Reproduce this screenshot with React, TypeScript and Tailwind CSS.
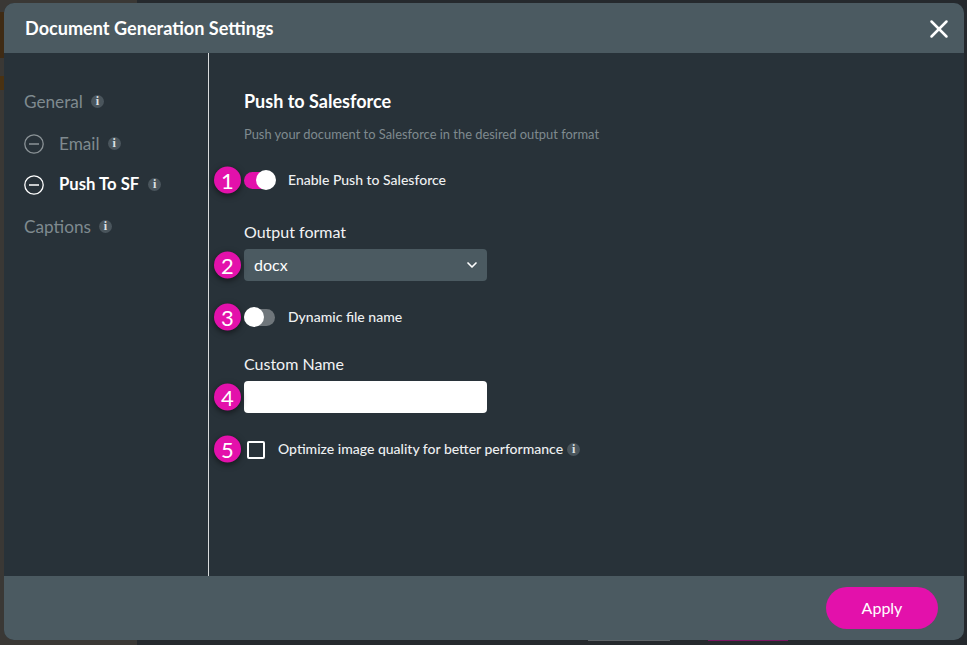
import { ChevronDown, X } from 'lucide-react'

const lato = { fontFamily: 'Lato, sans-serif' }

function Info() {
  return (
    <span className="inline-flex h-[13px] w-[13px] -translate-y-[1px] items-center justify-center rounded-full bg-[#4a555c] font-['Liberation_Serif',serif] text-[12px] font-bold leading-none text-[#dfe2e4]">
      i
    </span>
  )
}

function Badge({ n }: { n: number }) {
  return (
    <span className="absolute left-[-30px] top-1/2 flex h-[27px] w-[27px] -translate-y-1/2 items-center justify-center rounded-full bg-[#e311ab] text-[22px] leading-none text-white shadow-[0_2px_6px_rgba(0,0,0,0.55)]">
      {n}
    </span>
  )
}

function MinusCircle({ active }: { active?: boolean }) {
  return (
    <svg width="20" height="20" viewBox="0 0 20 20" fill="none" stroke={active ? '#ffffff' : '#8b9397'} strokeWidth="1.3">
      <circle cx="10" cy="10" r="9.2" />
      <path d="M5 10h10" />
    </svg>
  )
}

function Toggle({ on }: { on?: boolean }) {
  return (
    <span className={`relative block h-[17px] w-[31px] rounded-full ${on ? 'bg-[#e311ab]' : 'bg-[#6f767b]'}`}>
      <span className={`absolute top-[-2px] h-[20px] w-[20px] rounded-full bg-white ${on ? 'right-[-1px]' : 'left-0'}`} />
    </span>
  )
}

export default function App() {
  return (
    <div style={lato} className="relative h-[645px] w-[967px] overflow-hidden bg-[#25292d]">
      {/* page behind the dialog */}
      <div className="absolute inset-y-0 left-0 w-[137px] bg-[#3a3835]" />
      <div className="absolute left-0 top-[12px] h-[46px] w-[4px] bg-[#3f2b14]" />
      <div className="absolute left-0 top-[76px] h-[14px] w-[4px] bg-[#4a3212]" />
      <div className="absolute left-[588px] top-[640px] h-[1px] w-[82px] bg-[#5f6468]" />
      <div className="absolute left-[708px] top-[640px] h-[1px] w-[80px] bg-[#7a1560]" />

      <div className="relative ml-[4px] mt-[3px] flex h-[637px] w-[960px] flex-col overflow-hidden rounded-[10px] bg-[#283239]">
        <header className="flex h-[50px] shrink-0 items-center justify-between bg-[#4b5a61] pl-[21px] pr-[10px] pt-[2px]">
          <h1 className="text-[18.1px] font-bold text-white">Document Generation Settings</h1>
          <X size={30} strokeWidth={2} className="text-white" />
        </header>

        <div className="flex min-h-0 flex-1">
          <aside className="w-[205px] shrink-0 border-r border-[#d9dcdd] pl-[20px] pt-[37px] text-[17.2px] text-[#7f8a8f]">
            <div className="flex h-[24px] items-center gap-[8px]">
              General <Info />
            </div>
            <div className="mt-[18px] flex h-[24px] items-center">
              <MinusCircle />
              <span className="ml-[15px] mr-[8px]">Email</span>
              <Info />
            </div>
            <div className="mt-[17px] flex h-[24px] items-center text-[16.7px] font-bold text-white">
              <MinusCircle active />
              <span className="ml-[15px] mr-[9px]">Push To SF</span>
              <Info />
            </div>
            <div className="mt-[18px] flex h-[24px] items-center gap-[8px]">
              Captions <Info />
            </div>
          </aside>

          <main className="flex-1 pl-[35px] pt-[36px] text-white">
            <h2 className="text-[18px] font-bold leading-[24px]">Push to Salesforce</h2>
            <p className="mt-[12px] text-[12.9px] leading-[18px] text-[#7f8a8f]">
              Push your document to Salesforce in the desired output format
            </p>

            <div className="relative mt-[27px] flex h-[20px] items-center">
              <Badge n={1} />
              <Toggle on />
              <span className="ml-[13px] -translate-y-[1px] text-[14px] font-medium text-[#eef0f1]">Enable Push to Salesforce</span>
            </div>

            <div className="mt-[32px] text-[16px] leading-[20px] text-[#f2f3f4]">Output format</div>
            <div className="relative mt-[7px] flex h-[32px] w-[243px] items-center justify-between rounded-[4px] bg-[#4b5a61] pl-[10px] pr-[7px] text-[16px]">
              <Badge n={2} />
              docx
              <ChevronDown size={16} strokeWidth={2.5} />
            </div>

            <div className="relative mt-[26px] flex h-[20px] items-center">
              <Badge n={3} />
              <Toggle />
              <span className="ml-[13px] -translate-y-[1px] text-[14px] font-medium text-[#eef0f1]">Dynamic file name</span>
            </div>

            <div className="mt-[27px] text-[16px] leading-[20px] text-[#f2f3f4]">Custom Name</div>
            <div className="relative mt-[7px] h-[32px] w-[243px] rounded-[4px] bg-white">
              <Badge n={4} />
            </div>

            <div className="relative mt-[27px] flex h-[20px] items-center">
              <span className="-translate-y-[1px]">
                <Badge n={5} />
              </span>
              <span className="ml-[3px] h-[18px] w-[18px] rounded-[2px] border-2 border-white" />
              <span className="ml-[13px] mr-[4px] -translate-y-[2px] text-[14px] font-medium text-[#eef0f1]">
                Optimize image quality for better performance
              </span>
              <span className="-translate-y-[2px]">
                <Info />
              </span>
            </div>
          </main>
        </div>

        <footer className="flex h-[64px] shrink-0 items-center justify-end bg-[#4b5a61] pr-[26px]">
          <button className="h-[42px] w-[112px] rounded-full bg-[#e311ab] text-[16px] text-white">Apply</button>
        </footer>
      </div>
    </div>
  )
}
